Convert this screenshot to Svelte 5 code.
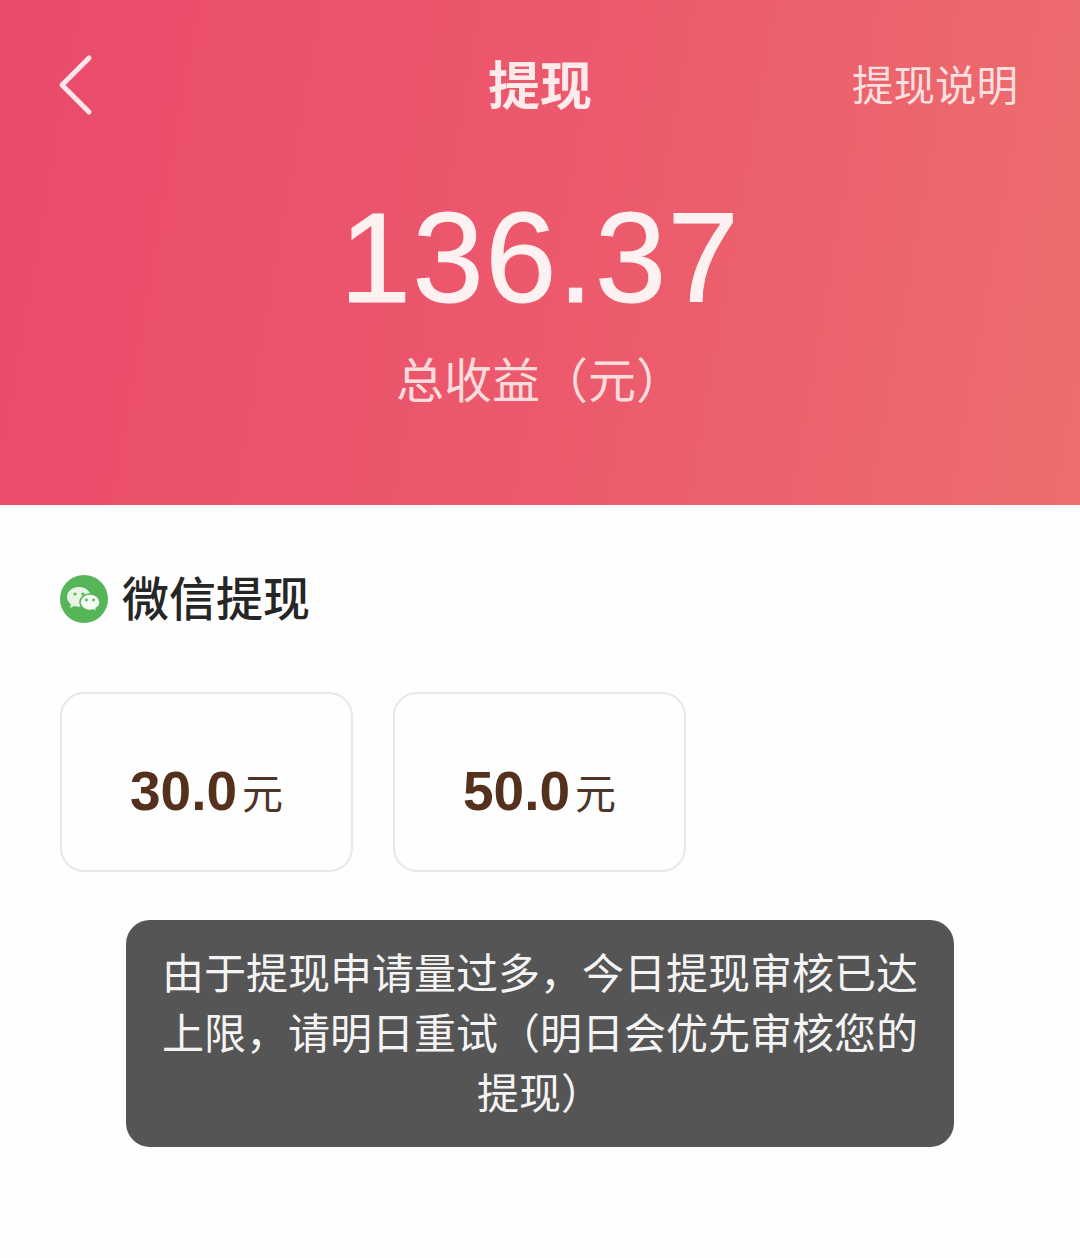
<script>
  const amounts = ['30.0', '50.0'];
</script>

<div class="page">
  <header class="hero">
    <div class="nav">
      <svg class="back" viewBox="0 0 36 64" width="36" height="64" aria-hidden="true">
        <path d="M31 4 L4 31 L31 58" fill="none" stroke="#fde6ea" stroke-width="5" stroke-linecap="round" stroke-linejoin="round" />
      </svg>
      <h1>提现</h1>
      <span class="help">提现说明</span>
    </div>
    <div class="total">136.37</div>
    <div class="label">总收益（元）</div>
  </header>

  <main class="body">
    <div class="method">
      <svg class="wx" viewBox="0 0 48 48" width="48" height="48" aria-hidden="true">
        <circle cx="24" cy="24" r="24" fill="#55b558" />
        <path d="M19 12 C12 12 7 16.500 7 22 C7 25 8.500 27.500 11 29.300 L10 33 L14.300 31 C15.800 31.500 17.300 31.700 19 31.700 C25.500 31.700 31 27.500 31 22 C31 16.500 25.500 12 19 12 Z" fill="#e8f5e4" />
        <path d="M30 19 C24.500 19 20 22.700 20 27.200 C20 31.700 24.500 35.400 30 35.400 C31.200 35.400 32.300 35.200 33.400 34.900 L37 36.800 L36.100 33.500 C38.500 32 40 29.700 40 27.200 C40 22.700 35.500 19 30 19 Z" fill="#f6fbf3" stroke="#55b558" stroke-width="1.500" />
        <circle cx="15" cy="19" r="1.600" fill="#55b558" />
        <circle cx="23" cy="19" r="1.600" fill="#55b558" />
        <circle cx="26.500" cy="25" r="1.400" fill="#55b558" />
        <circle cx="33.500" cy="25" r="1.400" fill="#55b558" />
      </svg>
      <span>微信提现</span>
    </div>

    <div class="options">
      {#each amounts as amount}
        <button class="option" type="button"><b>{amount}</b><span>元</span></button>
      {/each}
    </div>

    <div class="toast-row">
      <div class="toast">由于提现申请量过多，今日提现审核已达上限，请明日重试（明日会优先审核您的提现）</div>
    </div>
  </main>
</div>

<style>
  :global(body) {
    margin: 0;
    background: #fefefe;
  }

  .page {
    width: 1080px;
    height: 1258px;
    overflow: hidden;
    font-family: "Noto Sans CJK SC", "Liberation Sans", sans-serif;
  }

  .hero {
    height: 505px;
    box-sizing: border-box;
    padding-top: 48px;
    background: linear-gradient(100deg, #ea4a6c 0%, #ec5a6c 55%, #ec6e6e 100%);
    color: #fff;
    text-align: center;
  }

  .nav {
    position: relative;
    height: 70px;
    display: flex;
    align-items: center;
    justify-content: center;
  }

  .back {
    position: absolute;
    left: 58px;
    top: 6px;
  }

  h1 {
    margin: 0;
    font-size: 52px;
    font-weight: 700;
    line-height: 70px;
    color: #fdeaea;
  }

  .help {
    position: absolute;
    right: 62px;
    top: 0;
    font-size: 41.500px;
    line-height: 70px;
    color: #fbdfdf;
  }

  .total {
    margin-top: 76px;
    font-family: "Liberation Sans", Arial, sans-serif;
    font-size: 128px;
    line-height: 128px;
    letter-spacing: 1.500px;
    color: #fdf1f1;
    -webkit-text-stroke: 1px #fdf1f1;
  }

  .label {
    margin-top: 23px;
    font-size: 48px;
    line-height: 64px;
    color: #fbdcdc;
  }

  .body {
    padding: 0 60px;
  }

  .method {
    display: flex;
    align-items: center;
    gap: 14px;
    margin-top: 63px;
    margin-bottom: -1px;
    height: 62px;
    font-size: 47px;
    font-weight: 500;
    color: #262626;
  }

  .method span {
    margin-bottom: 8px;
  }

  .options {
    display: flex;
    gap: 40px;
    margin-top: 63px;
  }

  .option {
    width: 293px;
    height: 180px;
    box-sizing: border-box;
    padding: 18px 0 0;
    border: 2.500px solid #e8e8e8;
    border-radius: 24px;
    background: #fefefe;
    color: #55301c;
    font-family: "Liberation Sans", Arial, sans-serif;
    display: flex;
    align-items: center;
    justify-content: center;
  }

  .option b {
    font-size: 55px;
    font-weight: 700;
  }

  .option span {
    font-family: "Noto Sans CJK SC", sans-serif;
    font-size: 41px;
    margin-left: 5px;
    color: #4d3527;
  }

  .toast-row {
    display: flex;
    justify-content: center;
    margin-top: 48px;
  }

  .toast {
    width: 828px;
    box-sizing: border-box;
    padding: 21px 36px 26px;
    border-radius: 24px;
    background: #555555;
    color: #f4f4f4;
    font-size: 42px;
    line-height: 60px;
    text-align: center;
  }
</style>
